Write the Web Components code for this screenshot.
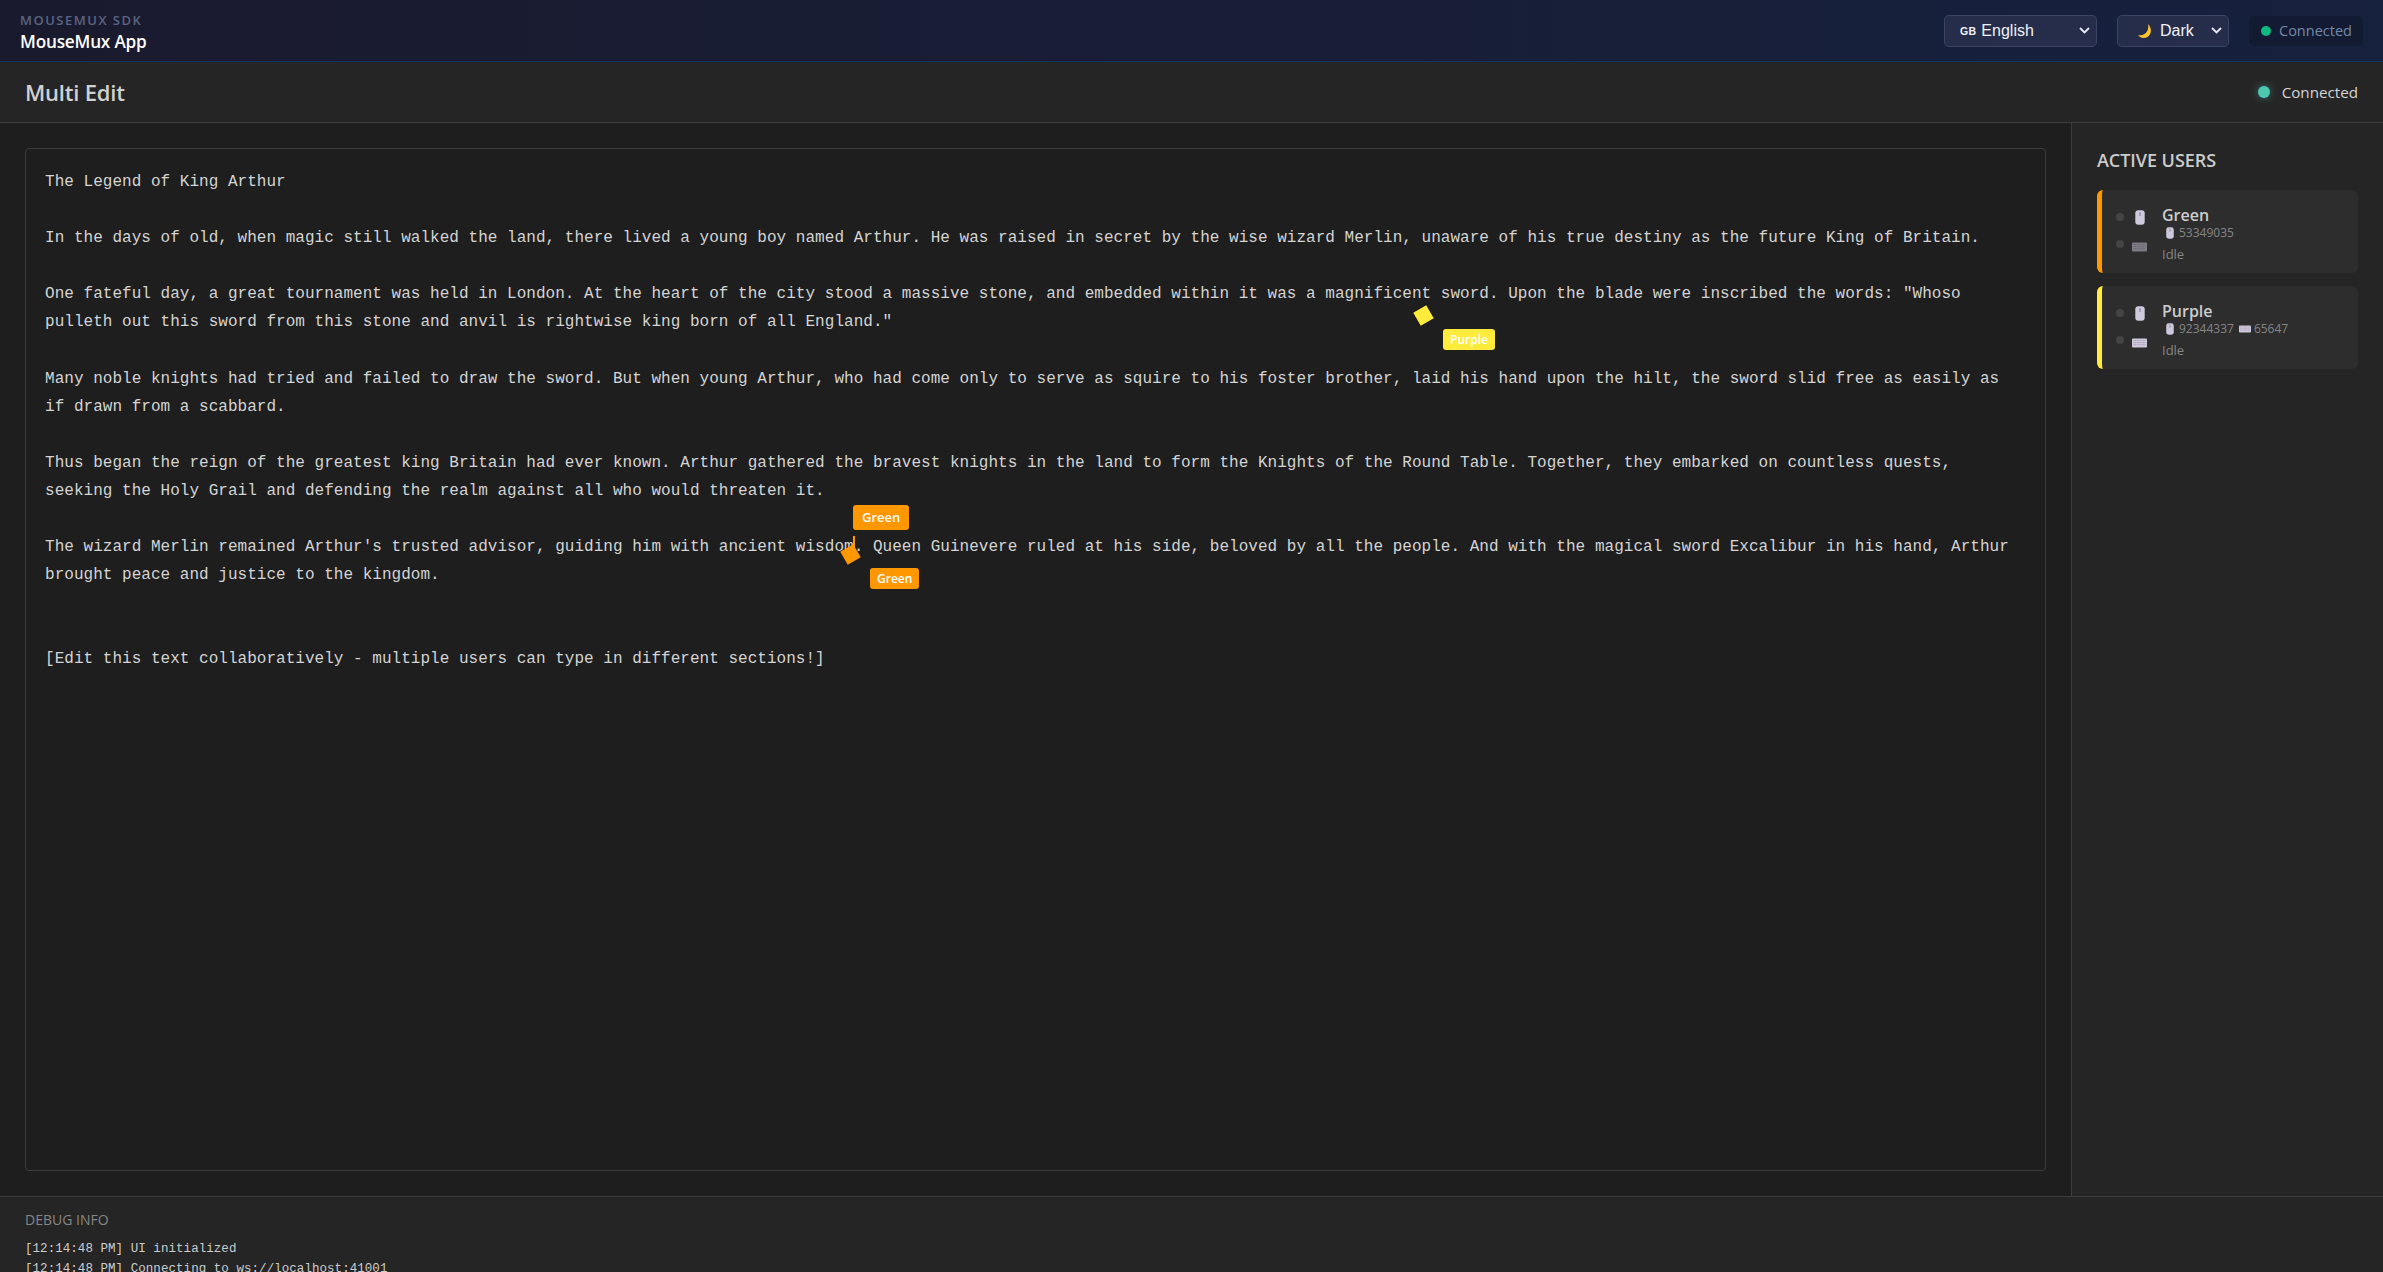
<!DOCTYPE html>
<html>
<head>
<meta charset="utf-8">
<title>Multi Edit</title>
<style>
  html, body { height: 100%; margin: 0; overflow: hidden; background: #1e1e1e; }
  body { font-family: "Open Sans", "Noto Sans", sans-serif; display: flex; flex-direction: column; }
</style>
</head>
<body>
<app-header></app-header>
<title-bar></title-bar>
<main-area>
  <text-editor>
    <user-cursor slot="cursors" style="left:1390px;top:159px" name="Purple" color="#ffeb3b"></user-cursor>
    <user-cursor slot="cursors" style="left:817px;top:398px" name="Green" color="#ff9800" top-label></user-cursor>
  </text-editor>
  <users-panel>
    <user-card name="Green" color="#ff9800" mouse="53349035"></user-card>
    <user-card name="Purple" color="#ffeb3b" mouse="92344337" keys="65647" keys-on></user-card>
  </users-panel>
</main-area>
<debug-panel></debug-panel>

<script>
// small inline icons, used by more than one element
const mouseIcon = (w, h) => `<svg width="${w}" height="${h}" viewBox="0 0 10 15" style="display:block"><rect x="0.3" y="0.3" width="9.4" height="14.4" rx="3" fill="#cfc8dc"/><rect x="4.4" y="2" width="1.2" height="4" fill="#8f889e"/></svg>`;
const keyboardIcon = (w, h) => `<svg width="${w}" height="${h}" viewBox="0 0 15 10" style="display:block"><rect x="0" y="0.5" width="15" height="9" rx="1" fill="#cfc8dc"/><path d="M1.5 2.5h12M1.5 4.500h12M1.500 6.500h12" stroke="#a9a2b8" stroke-width="1" stroke-dasharray="1 .6"/></svg>`;
const chevron = `<svg width="11" height="7" viewBox="0 0 11 7" style="display:block"><path d="M1 1l4.500 4.500L10 1" fill="none" stroke="#e8eaf2" stroke-width="1.800"/></svg>`;

class AppHeader extends HTMLElement {
    constructor() {
        super();
        this.attachShadow({ mode: 'open' });
        this.shadowRoot.innerHTML = `
        <style>
            :host {
                display: flex;
                flex: none;
                align-items: center;
                justify-content: space-between;
                height: 61px;
                padding: 0 20px 0 20px;
                background: linear-gradient(90deg, #1a1a2e, #16213e);
                border-bottom: 1px solid #0f3460;
            }
            .brand { display: flex; flex-direction: column; padding-top: 3px; }
            .sdk { font-size: 13px; line-height: 18px; letter-spacing: 1.5px; color: #5a6480; font-weight: 600; }
            .app { font-size: 17.2px; line-height: 24px; color: #fff; font-weight: 600; letter-spacing: -0.2px; margin-top: 1px; }
            .tools { display: flex; align-items: center; }
            .pick {
                display: flex;
                align-items: center;
                box-sizing: border-box;
                height: 32px;
                background: #252d4a;
                border: 1px solid #3b4463;
                border-radius: 5px;
                color: #f0f2f8;
                font-family: "Liberation Sans", sans-serif;
                font-size: 16px;
            }
            .lang { width: 153px; padding: 0 6px 0 15px; margin-right: 20px; }
            .theme { width: 112px; padding: 0 6px 0 19px; margin-right: 20px; }
            .flag { font-size: 10.5px; font-weight: 700; margin-right: 5px; letter-spacing: .3px; }
            .moon { margin-right: 7px; }
            .status {
                display: flex;
                align-items: center;
                box-sizing: border-box;
                height: 30px;
                width: 114px;
                padding-left: 12px;
                background: #131b33;
                border-radius: 5px;
                color: #7488a8;
                font-size: 14.5px;
            }
            .dot { width: 10px; height: 10px; border-radius: 50%; background: #10b981; margin-right: 8px; }
        </style>
        <div class="brand">
            <div class="sdk">MOUSEMUX SDK</div>
            <div class="app">MouseMux App</div>
        </div>
        <div class="tools">
            <div class="pick lang"><span class="flag">GB</span>English<span style="margin-left:auto">${chevron}</span></div>
            <div class="pick theme">
                <svg class="moon" width="16" height="16" viewBox="0 0 16 16"><path d="M11 1C15 5 15 11 10.500 14C7 16 3 15 1 12C5 13 9 11 10.500 7.500C11.500 5 11.500 3 11 1z" fill="#fdc52a"/></svg>
                Dark<span style="margin-left:auto">${chevron}</span>
            </div>
            <div class="status"><span class="dot"></span>Connected</div>
        </div>
        `;
    }
}

class TitleBar extends HTMLElement {
    constructor() {
        super();
        this.attachShadow({ mode: 'open' });
        this.shadowRoot.innerHTML = `
        <style>
            :host {
                display: flex;
                flex: none;
                align-items: center;
                justify-content: space-between;
                height: 60px;
                padding: 0 25px;
                background: #252525;
                border-bottom: 1px solid #3c3c3c;
            }
            h1 { margin: 0; font-size: 22px; font-weight: 600; color: #d0d0d0; letter-spacing: -0.2px; }
            .state { display: flex; align-items: center; color: #d4d4d4; font-size: 15.2px; }
            .dot { width: 12px; height: 12px; border-radius: 50%; background: #4ec9b0; box-shadow: 0 0 8px rgba(78,201,176,.5); margin-right: 12px; }
        </style>
        <h1>Multi Edit</h1>
        <div class="state"><span class="dot"></span>Connected</div>
        `;
    }
}

class MainArea extends HTMLElement {
    constructor() {
        super();
        this.attachShadow({ mode: 'open' });
        this.shadowRoot.innerHTML = `
        <style>
            :host { display: flex; flex: 1; min-height: 0; }
        </style>
        <slot></slot>
        `;
    }
}

const storyText = `The Legend of King Arthur

In the days of old, when magic still walked the land, there lived a young boy named Arthur. He was raised in secret by the wise wizard Merlin, unaware of his true destiny as the future King of Britain.

One fateful day, a great tournament was held in London. At the heart of the city stood a massive stone, and embedded within it was a magnificent sword. Upon the blade were inscribed the words: "Whoso pulleth out this sword from this stone and anvil is rightwise king born of all England."

Many noble knights had tried and failed to draw the sword. But when young Arthur, who had come only to serve as squire to his foster brother, laid his hand upon the hilt, the sword slid free as easily as if drawn from a scabbard.

Thus began the reign of the greatest king Britain had ever known. Arthur gathered the bravest knights in the land to form the Knights of the Round Table. Together, they embarked on countless quests, seeking the Holy Grail and defending the realm against all who would threaten it.

The wizard Merlin remained Arthur's trusted advisor, guiding him with ancient wisdom. Queen Guinevere ruled at his side, beloved by all the people. And with the magical sword Excalibur in his hand, Arthur brought peace and justice to the kingdom.


[Edit this text collaboratively - multiple users can type in different sections!]`;

class TextEditor extends HTMLElement {
    constructor() {
        super();
        this.attachShadow({ mode: 'open' });
        this.shadowRoot.innerHTML = `
        <style>
            :host {
                display: flex;
                flex: 1;
                min-width: 0;
                padding: 25px;
            }
            .box {
                position: relative;
                flex: 1;
                box-sizing: border-box;
                padding: 19px 25px 19px 19px;
                background: #1e1e1e;
                border: 1px solid #3c3c3c;
                border-radius: 4px;
                color: #d4d4d4;
                font-family: "Liberation Mono", monospace;
                font-size: 16px;
                letter-spacing: 0.025px;
                line-height: 28.08px;
                white-space: pre-wrap;
            }
        </style>
        <div class="box"><span class="text"></span><slot name="cursors"></slot></div>
        `;
        this.shadowRoot.querySelector('.text').textContent = storyText;
    }
}

class UserCursor extends HTMLElement {
    constructor() {
        super();
        this.attachShadow({ mode: 'open' });
    }

    connectedCallback() {
        const color = this.getAttribute('color');
        const name = this.getAttribute('name');
        const top = this.hasAttribute('top-label');
        this.shadowRoot.innerHTML = `
        <style>
            :host { position: absolute; display: block; width: 0; height: 0; font-family: "Open Sans", sans-serif; letter-spacing: 0; }
            .mark { position: absolute; left: 0; top: 0; width: 15px; height: 15px; background: ${color}; transform: rotate(60deg); }
            .tag {
                position: absolute;
                left: 27px;
                top: 21px;
                padding: 0 7px;
                height: 21px;
                line-height: 21px;
                background: ${color};
                color: #fff;
                border-radius: 3px;
                font-size: 12px;
                font-weight: 600;
                white-space: nowrap;
            }
            .caret { position: absolute; left: 10px; top: -11px; width: 2px; height: 20px; background: ${color}; }
            .top { left: 10px; top: -42px; height: 25px; line-height: 25px; padding: 0 9px; font-size: 13px; }
        </style>
        ${top ? `<div class="caret"></div><div class="tag top">${name}</div>` : ''}
        <div class="mark"></div>
        <div class="tag">${name}</div>
        `;
    }
}

class UsersPanel extends HTMLElement {
    constructor() {
        super();
        this.attachShadow({ mode: 'open' });
        this.shadowRoot.innerHTML = `
        <style>
            :host {
                display: flex;
                flex-direction: column;
                flex: none;
                box-sizing: border-box;
                width: 312px;
                padding: 25px;
                background: #252525;
                border-left: 1px solid #3c3c3c;
            }
            h2 { margin: 0 0 18px; font-size: 18px; line-height: 24px; font-weight: 600; color: #cccccc; letter-spacing: -0.05px; }
            .list { display: flex; flex-direction: column; gap: 13px; }
        </style>
        <h2>ACTIVE USERS</h2>
        <div class="list"><slot></slot></div>
        `;
    }
}

class UserCard extends HTMLElement {
    constructor() {
        super();
        this.attachShadow({ mode: 'open' });
    }

    connectedCallback() {
        const keys = this.getAttribute('keys');
        this.shadowRoot.innerHTML = `
        <style>
            :host {
                display: flex;
                align-items: center;
                box-sizing: border-box;
                height: 83px;
                padding-left: 14px;
                background: #2d2d2d;
                border-left: 5px solid ${this.getAttribute('color')};
                border-radius: 6px;
            }
            .devices { display: grid; grid-template-columns: 8px 15px; column-gap: 8px; row-gap: 15px; align-items: center; justify-items: center; margin-right: 15px; }
            .led { width: 8px; height: 8px; border-radius: 50%; background: #444; }
            .led.low { margin-bottom: 6px; }
            .dim { opacity: .5; }
            .info { display: flex; flex-direction: column; margin-top: 6px; }
            .name { font-size: 16px; line-height: 20px; font-weight: 600; color: #cccccc; }
            .stats { display: flex; align-items: center; font-size: 12px; line-height: 16px; color: #858585; padding-left: 4px; }
            .stats svg { margin-right: 5px; }
            .stats svg.kb { margin-right: 3px; }
            .stats .n { margin-right: 5px; }
            .idle { font-size: 13px; line-height: 22px; color: #858585; margin-top: 2px; }
        </style>
        <div class="devices">
            <span class="led"></span>${mouseIcon(10, 15)}
            <span class="led low"></span><span class="${this.hasAttribute('keys-on') ? '' : 'dim'}">${keyboardIcon(15, 10)}</span>
        </div>
        <div class="info">
            <div class="name">${this.getAttribute('name')}</div>
            <div class="stats">${mouseIcon(8, 12)}<span class="n">${this.getAttribute('mouse')}</span>${keys ? keyboardIcon(12, 8).replace('<svg', '<svg class="kb"') + `<span>${keys}</span>` : ''}</div>
            <div class="idle">Idle</div>
        </div>
        `;
    }
}

class DebugPanel extends HTMLElement {
    constructor() {
        super();
        this.attachShadow({ mode: 'open' });
        this.shadowRoot.innerHTML = `
        <style>
            :host {
                display: block;
                flex: none;
                box-sizing: border-box;
                height: 76px;
                overflow: hidden;
                padding: 13px 25px 0;
                background: #252525;
                border-top: 1px solid #3c3c3c;
            }
            h3 { margin: 0 0 9px; font-size: 14px; line-height: 20px; font-weight: 500; color: #858585; }
            .log { font-family: "Liberation Mono", monospace; font-size: 12.5px; letter-spacing: 0.05px; line-height: 20px; color: #cccccc; white-space: pre; }
        </style>
        <h3>DEBUG INFO</h3>
        <div class="log">[12:14:48 PM] UI initialized
[12:14:48 PM] Connecting to ws://localhost:41001</div>
        `;
    }
}

customElements.define('app-header', AppHeader);
customElements.define('title-bar', TitleBar);
customElements.define('main-area', MainArea);
customElements.define('text-editor', TextEditor);
customElements.define('user-cursor', UserCursor);
customElements.define('users-panel', UsersPanel);
customElements.define('user-card', UserCard);
customElements.define('debug-panel', DebugPanel);
</script>
</body>
</html>
